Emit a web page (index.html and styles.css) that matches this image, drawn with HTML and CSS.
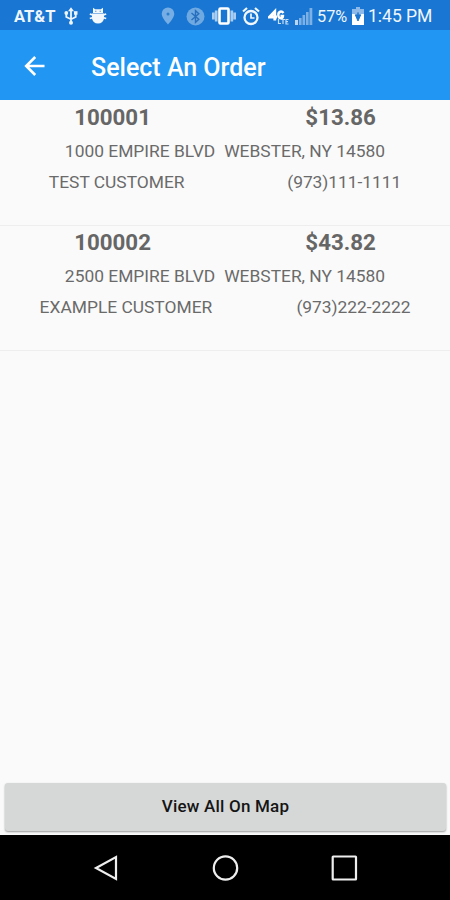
FILE: index.html
```html
<!DOCTYPE html>
<html lang="en">
<head>
<meta charset="utf-8">
<title>Select An Order</title>
<link rel="stylesheet" href="styles.css">
</head>
<body>
<div class="screen">
  <div class="status">
    <span class="carrier">AT&amp;T</span>
    <svg class="usb" width="14" height="18" viewBox="0 0 14 18" fill="none" stroke="#eef5fc" stroke-width="1.8"><path d="M7 3v12M7 12.200L2.300 10V6.500M7 12.200L11.700 10V6.500"/><g fill="#eef5fc" stroke="none"><path d="M4 4.300L7 .300l3 4z"/><circle cx="7" cy="15.700" r="2"/><circle cx="2.300" cy="6" r="1.900"/><path d="M10 4.200h3.500v3.500H10z"/></g></svg>
    <svg class="debug" width="18" height="18" viewBox="0 0 18 18" fill="#f3f8fd"><path d="M4 .800L6.200 2.300h5.600L14 .800V6H4zM3 6.600h12V11a6 5.500 0 0 1-12 0z"/><path d="M.800 7l3.500 1.200M17.200 7l-3.500 1.200M.800 11.500l3.500-1M17.200 11.500l-3.500-1" stroke="#f3f8fd" stroke-width="1.800"/><path d="M6.300 3.800h1v1h-1zM10.700 3.800h1v1h-1z" fill="#1976d2"/></svg>
    <svg class="pin" width="14" height="18" viewBox="0 0 14 18"><path d="M7 .500a6.300 6.300 0 0 0-6.300 6.300C.700 11 7 17.500 7 17.500S13.300 11 13.300 6.800A6.300 6.300 0 0 0 7 .500z" fill="#75ade4"/><circle cx="7" cy="7" r="1.500" fill="#2b7ece"/></svg>
    <svg class="bt" width="19" height="19" viewBox="0 0 19 19" fill="none"><circle cx="9.500" cy="9.500" r="9" fill="#6fa9e2"/><path d="M5.500 6l7.300 6.300-3.300 3V3.700l3.300 3L5.500 13" stroke="#276fbd" stroke-width="1.400"/></svg>
    <svg class="vibrate" width="24" height="20" viewBox="0 0 24 20"><path d="M1.300 6.500v7M4.200 4.500v11M19.800 4.500v11M22.700 6.500v7" stroke="#a9cdf1" stroke-width="2.700"/><rect x="7.500" y="2.500" width="9" height="15" rx="1" fill="#1976d2" stroke="#fff" stroke-width="2.600"/></svg>
    <svg class="alarm" width="18" height="19" viewBox="0 0 18 19" fill="none" stroke="#f2f8fd"><circle cx="9" cy="10.500" r="6.500" stroke-width="2.300"/><path d="M1 4.500L5 1M17 4.500L13 1" stroke-width="2.200"/><path d="M9 6.500V11h3.500" stroke-width="1.700"/></svg>
    <svg class="lte" width="21" height="18" viewBox="0 0 21 18" fill="none" stroke="#fff"><path d="M6.800 13.500V4.500L1.500 10H9" stroke-width="2.800"/><path d="M15.500 6C13.500 3.500 10.300 4.500 10.300 8c0 4 4.700 4.500 4.700 1h-2.500" stroke-width="2.400"/><path d="M10.500 12v4.500h2.500M13 12.500h4M15 12.500V17M20.500 12.500H18V17h2.500M18 14.700h2" stroke="#c7def5" stroke-width="1.200"/></svg>
    <svg class="signal" width="18" height="18" viewBox="0 0 18 18" fill="#7db1e5"><path d="M0 13h3v5H0z" fill="#b9d6f3"/><path d="M4 11h2.600v7H4zM7.500 8h2.600v10H7.500zM11 5h2.600v13H11zM14.500 1h2.800v17h-2.800z"/></svg>
    <span class="percent">57%</span>
    <svg class="battery" width="12" height="18" viewBox="0 0 12 18"><path d="M4 0h4v2h4v5H0V2h4z" fill="#8dbae8"/><path d="M0 7h12v11H0z" fill="#fff"/><path d="M6 5.500v2.300H3.300L6 14l2.700-6.200H6z" fill="#1976d2" stroke="#1976d2"/></svg>
    <span class="clock">1:45 PM</span>
  </div>
  <header class="appbar">
    <svg class="back" width="22" height="22" viewBox="0 0 22 22" fill="none" stroke="#fff" stroke-width="2.600"><path d="M20.500 11H3M11.200 2L2.200 11l9 9"/></svg>
    <h1>Select An Order</h1>
  </header>
  <main class="orders">
    <section class="order">
      <div class="row top"><span>100001</span><span>$13.86</span></div>
      <div class="row address"><span>1000 EMPIRE BLVD</span><span>WEBSTER, NY 14580</span></div>
      <div class="row contact"><span>TEST CUSTOMER</span><span>(973)111-1111</span></div>
    </section>
    <section class="order">
      <div class="row top"><span>100002</span><span>$43.82</span></div>
      <div class="row address"><span>2500 EMPIRE BLVD</span><span>WEBSTER, NY 14580</span></div>
      <div class="row contact"><span>EXAMPLE CUSTOMER</span><span>(973)222-2222</span></div>
    </section>
  </main>
  <button class="map-button">View All On Map</button>
  <nav class="navbar">
    <svg width="28" height="28" viewBox="0 0 28 28"><path d="M24 3v22L4 14z"/></svg>
    <svg width="28" height="28" viewBox="0 0 28 28"><circle cx="14.500" cy="14" r="11.700"/></svg>
    <svg width="28" height="28" viewBox="0 0 28 28"><rect x="2.700" y="2.500" width="23.300" height="23" rx=".5"/></svg>
  </nav>
</div>
</body>
</html>
```
FILE: styles.css
```css
* { box-sizing: border-box; }
body { margin: 0; font-family: Roboto, sans-serif; }
svg { display: block; flex: none; }
.screen { width: 450px; height: 900px; display: flex; flex-direction: column; background: #fafafa; overflow: hidden; }
.status { height: 30px; flex: none; display: flex; align-items: center; padding: 2px 0 0 14px; background: #1976d2; color: #f0f6fd; white-space: nowrap; }
.carrier { width: 42px; font-size: 16.5px; font-weight: 700; }
.usb { margin-left: 8px; }
.debug { margin-left: 11px; }
.pin { margin-left: 54px; }
.bt { margin-left: 11px; }
.vibrate { margin-left: 7px; }
.alarm { margin-left: 6px; }
.lte { margin-left: 8px; }
.signal { margin-left: 6px; }
.percent { width: 30px; margin-left: 4px; font-size: 16.3px; }
.battery { margin-left: 5px; }
.clock { margin-left: 4px; font-size: 17.5px; }
.appbar { height: 70px; flex: none; display: flex; align-items: center; padding: 4px 0 0 24px; background: #2196f3; color: #fff; }
.back { margin-top: -3px; }
h1 { margin: 1px 0 0 45px; font-size: 25px; line-height: 30px; font-weight: 500; }
.orders { flex: 1; }
.order { height: 125px; border-bottom: 1px solid #eeeeee; color: #6a6a6a; font-size: 17.4px; }
.order:first-child { height: 126px; }
.order + .order { display: flow-root; }
.order + .order .top { margin-top: -1px; }
.row { display: flex; justify-content: space-around; white-space: nowrap; }
.top { height: 35px; line-height: 35px; gap: 6px; font-size: 22.3px; font-weight: 700; color: #666; }
.address { height: 31.5px; line-height: 32px; justify-content: center; gap: 9px; }
.contact { height: 31px; line-height: 31px; gap: 5px; }
.contact span:last-child { letter-spacing: -.05px; }
.map-button { height: 48px; flex: none; margin: 0 4px 4px 5px; padding: 0 0 2px; border: 0; border-radius: 3px; background: #d6d8d7; box-shadow: 0 1px 2px #999; color: #151515; font: 500 17px Roboto, sans-serif; letter-spacing: .2px; }
.navbar { height: 65px; flex: none; display: flex; justify-content: center; align-items: center; gap: 91px; background: #000; }
.navbar svg { fill: none; stroke: #eee; stroke-width: 2.2; }
```
